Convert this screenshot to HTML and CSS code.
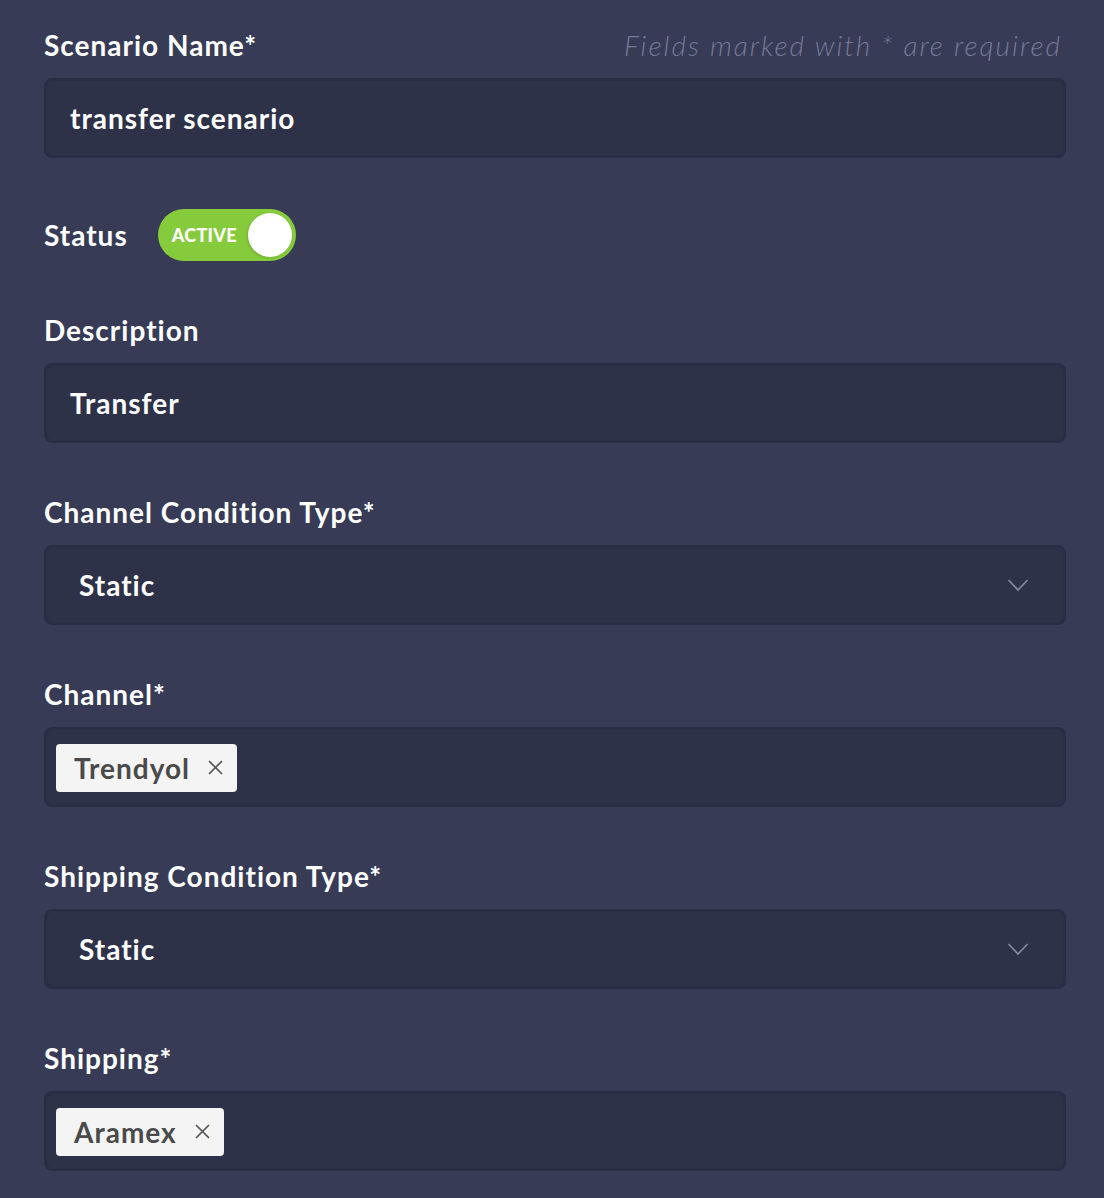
FILE: index.html
```html
<!DOCTYPE html>
<html>
<head>
<meta charset="utf-8">
<link rel="stylesheet" href="styles.css">
</head>
<body>
<form class="form">
  <div class="field">
    <div class="label-row">
      <label class="label">Scenario Name*</label>
      <span class="hint">Fields marked with * are required</span>
    </div>
    <div class="input">transfer scenario</div>
  </div>

  <div class="status-row">
    <span class="label">Status</span>
    <div class="toggle">
      <span class="toggle-text">ACTIVE</span>
      <span class="knob"></span>
    </div>
  </div>

  <div class="field">
    <div class="label-row"><label class="label">Description</label></div>
    <div class="input">Transfer</div>
  </div>

  <div class="field">
    <div class="label-row"><label class="label">Channel Condition Type*</label></div>
    <div class="input select">
      <span>Static</span>
      <svg class="chevron" width="22" height="14" viewBox="0 0 22 14"><path d="M1.5 2 L11 12 L20.5 2" fill="none" stroke="#858aa3" stroke-width="1.6"/></svg>
    </div>
  </div>

  <div class="field">
    <div class="label-row"><label class="label">Channel*</label></div>
    <div class="input multi">
      <span class="tag">Trendyol<svg class="tag-x" width="15" height="15" viewBox="0 0 15 15"><path d="M1 1 L14 14 M14 1 L1 14" stroke="#555" stroke-width="1.7"/></svg></span>
    </div>
  </div>

  <div class="field">
    <div class="label-row"><label class="label">Shipping Condition Type*</label></div>
    <div class="input select">
      <span>Static</span>
      <svg class="chevron" width="22" height="14" viewBox="0 0 22 14"><path d="M1.5 2 L11 12 L20.5 2" fill="none" stroke="#858aa3" stroke-width="1.6"/></svg>
    </div>
  </div>

  <div class="field">
    <div class="label-row"><label class="label">Shipping*</label></div>
    <div class="input multi">
      <span class="tag">Aramex<svg class="tag-x" width="15" height="15" viewBox="0 0 15 15"><path d="M1 1 L14 14 M14 1 L1 14" stroke="#555" stroke-width="1.7"/></svg></span>
    </div>
  </div>
</form>
</body>
</html>
```

FILE: styles.css
```css
html, body {
  margin: 0;
  padding: 0;
  background: #373b56;
}
body {
  font-family: "Lato", "Open Sans", sans-serif;
  color: #ffffff;
}
.form {
  padding: 27px 38px 0 44px;
  display: flex;
  flex-direction: column;
}
.field {
  display: flex;
  flex-direction: column;
  margin-bottom: 51px;
}
.label-row {
  display: flex;
  justify-content: space-between;
  align-items: center;
  height: 36px;
  margin-bottom: 15px;
}
.label {
  font-size: 28px;
  font-weight: 700;
  letter-spacing: 1px;
  color: #ffffff;
  line-height: 36px;
}
.hint {
  font-size: 28px;
  font-style: italic;
  font-weight: 300;
  color: #747994;
  letter-spacing: 2px;
  padding-right: 4px;
}
.input {
  box-sizing: border-box;
  height: 80px;
  background: #2e3248;
  border: 3px solid #2a2d43;
  border-radius: 8px;
  display: flex;
  align-items: center;
  padding: 0 23px;
  font-size: 28px;
  font-weight: 700;
  letter-spacing: 1px;
  color: #ffffff;
}
.select {
  padding: 0 34px 0 32px;
  justify-content: space-between;
}
.chevron {
  display: block;
}
.multi {
  padding: 1px 9px 0;
}
.tag {
  display: flex;
  align-items: center;
  height: 48px;
  background: #f4f4f4;
  border-radius: 4px;
  color: #4a4a4a;
  padding: 0 14px 0 18px;
  font-size: 28px;
  font-weight: 700;
  letter-spacing: 1px;
}
.tag-x {
  margin-left: 18px;
}
.status-row {
  display: flex;
  align-items: center;
  margin-bottom: 51px;
  height: 52px;
}
.status-row .label {
  margin-right: 30px;
}
.toggle {
  box-sizing: border-box;
  width: 138px;
  height: 52px;
  border-radius: 26px;
  background: #86cb3c;
  display: flex;
  align-items: center;
  justify-content: space-between;
  padding: 0 4px 0 14px;
}
.toggle-text {
  font-size: 18px;
  font-weight: 900;
  color: #ffffff;
  letter-spacing: 0.3px;
}
.knob {
  width: 44px;
  height: 44px;
  border-radius: 50%;
  background: #ffffff;
  box-shadow: -1px 1px 3px rgba(0,0,0,0.15);
}
```
